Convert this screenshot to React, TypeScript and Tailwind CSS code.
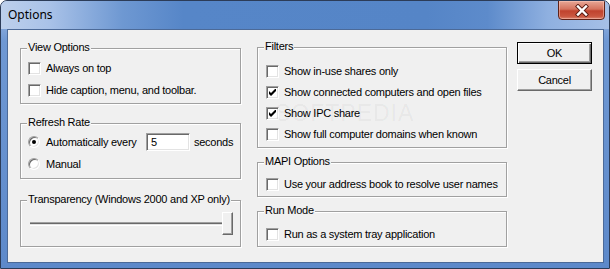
import React from "react";

const Check = ({ checked = false }: { checked?: boolean }) => (
  <span className="w-[13px] h-[13px] shrink-0 bg-white border border-t-[#a0a0a0] border-l-[#a0a0a0] border-r-white border-b-white shadow-[inset_1px_1px_0_#696969,inset_-1px_-1px_0_#e3e3e3] flex items-center justify-center">
    {checked && (
      <svg width="7" height="7" viewBox="0 0 7 7" className="block">
        <path d="M0 2 L2 4 L7 -1 L7 2 L2 7 L0 5 Z" fill="#000" />
      </svg>
    )}
  </span>
);

const Radio = ({ checked = false }: { checked?: boolean }) => (
  <span className="w-[12px] h-[12px] shrink-0 rounded-full bg-white border border-t-[#a0a0a0] border-l-[#a0a0a0] border-r-white border-b-white shadow-[inset_1px_1px_0_#696969,inset_-1px_-1px_0_#e3e3e3] flex items-center justify-center">
    {checked && <span className="w-[4px] h-[4px] rounded-full bg-black" />}
  </span>
);

const Row = ({ checked, children }: { checked?: boolean; children: React.ReactNode }) => (
  <div className="h-[13px] flex items-center gap-[5px] leading-[13px] whitespace-nowrap">
    <Check checked={checked} />
    <span>{children}</span>
  </div>
);

const Group = ({
  label,
  className,
  children,
}: {
  label: string;
  className: string;
  children?: React.ReactNode;
}) => (
  <div
    className={
      "relative border border-[#a0a0a0] shadow-[inset_1px_1px_0_#fff,1px_1px_0_#fff] " + className
    }
  >
    <span className="absolute -top-[8px] left-[6px] bg-[#f0f0f0] px-[1px] leading-[13px] whitespace-nowrap">
      {label}
    </span>
    {children}
  </div>
);

export default function App() {
  return (
    <div className="w-[610px] h-[269px] border border-[#2c3c58] rounded-t-[7px] bg-[linear-gradient(180deg,#a9c2e7_0%,#6f98d3_15%,#5d89ca_100%)] flex flex-col overflow-hidden font-['Liberation_Sans',Arial,sans-serif] text-[11px] tracking-[-0.25px] text-black">
      {/* Title bar */}
      <div className="h-[28px] shrink-0 flex items-start bg-[linear-gradient(90deg,#bdd0ec_0%,#a9c2e8_8%,#6e98d2_20%,#5686c8_30%,#5585c7_70%,#5d8bcb_80%,#8fb0e0_90%,#a6c0e7_100%)]">
        <span className="mt-[6px] ml-[7px] font-['Noto_Sans',sans-serif] text-[12px] leading-[16px] tracking-normal text-black">
          Options
        </span>
        <div className="ml-auto -mt-[1px] mr-[4px] w-[47px] h-[20px] rounded-b-[4px] border border-[#5e2218] bg-[linear-gradient(180deg,#e8a796_0%,#d5735e_45%,#c0432e_55%,#c9563f_85%,#dc8670_100%)] shadow-[inset_0_0_0_1px_rgba(255,210,200,0.45)] flex items-center justify-center">
          <svg width="16" height="13" viewBox="0 0 16 13">
            <path d="M4 2.5 L12 10.5 M12 2.5 L4 10.5" stroke="#5a1d14" strokeWidth="4.2" strokeLinecap="square" />
            <path d="M4 2.5 L12 10.5 M12 2.5 L4 10.5" stroke="#ffffff" strokeWidth="2.4" strokeLinecap="square" />
          </svg>
        </div>
      </div>

      {/* Client area */}
      <div className="ml-[6px] mr-[5px] h-[234px] shrink-0 border border-[#4c6a98] bg-[#f0f0f0] flex items-start pl-[12px] pt-[12px]">
        {/* Left column */}
        <div className="mt-[6px] w-[221px] flex flex-col">
          <Group label="View Options" className="h-[56px] flex flex-col pl-[7px] pt-[13px] gap-[9px]">
            <Row>Always on top</Row>
            <Row>Hide caption, menu, and toolbar.</Row>
          </Group>

          <Group label="Refresh Rate" className="mt-[19px] h-[56px] flex flex-col pl-[7px] pt-[9px] gap-[4px]">
            <div className="h-[18px] flex items-center whitespace-nowrap">
              <Radio checked />
              <span className="ml-[6px] w-[100px] shrink-0 leading-[13px]">Automatically every</span>
              <div className="w-[44px] h-[18px] shrink-0 bg-white border border-t-[#a0a0a0] border-l-[#a0a0a0] border-r-white border-b-white shadow-[inset_1px_1px_0_#696969,inset_-1px_-1px_0_#e3e3e3] pl-[4px] leading-[16px]">
                5
              </div>
              <span className="ml-[4px] leading-[13px]">seconds</span>
            </div>
            <div className="h-[18px] flex items-center whitespace-nowrap">
              <Radio />
              <span className="ml-[6px] leading-[13px]">Manual</span>
            </div>
          </Group>

          <Group label="Transparency (Windows 2000 and XP only)" className="mt-[21px] h-[47px] flex items-start pl-[9px] pt-[11px]">
            <div className="flex items-center">
              <div className="w-[192px] h-[4px] border-t border-b border-t-[#a0a0a0] border-b-white bg-[#e3e3e3] shadow-[inset_0_1px_0_#696969]" />
              <div className="w-[11px] h-[23px] bg-[#f0f0f0] border border-t-white border-l-white border-r-[#696969] border-b-[#696969] shadow-[inset_-1px_-1px_0_#a0a0a0]" />
            </div>
          </Group>
        </div>

        {/* Right column */}
        <div className="ml-[16px] mt-[5px] w-[250px] flex flex-col">
          <Group label="Filters" className="h-[101px] flex flex-col pl-[8px] pt-[17px] gap-[8px]">
            <span className="absolute left-[17px] top-[53px] text-[23px] leading-[24px] tracking-[1px] text-black/[0.05] pointer-events-none whitespace-nowrap">
              SOFTPEDIA
            </span>
            <Row>Show in-use shares only</Row>
            <Row checked>Show connected computers and open files</Row>
            <Row checked>Show IPC share</Row>
            <Row>Show full computer domains when known</Row>
          </Group>

          <Group label="MAPI Options" className="mt-[14px] h-[35px] flex flex-col pl-[8px] pt-[15px]">
            <Row>Use your address book to resolve user names</Row>
          </Group>

          <Group label="Run Mode" className="mt-[14px] h-[36px] flex flex-col pl-[8px] pt-[16px]">
            <Row>Run as a system tray application</Row>
          </Group>
        </div>

        {/* Buttons */}
        <div className="ml-[10px] w-[75px] flex flex-col gap-[5px]">
          <div className="h-[22px] border border-black bg-[#f0f0f0] shadow-[inset_1px_1px_0_#fff,inset_-1px_-1px_0_#696969,inset_-2px_-2px_0_#a0a0a0] flex items-center justify-center leading-[13px]">
            OK
          </div>
          <div className="h-[22px] border border-t-white border-l-white border-r-[#696969] border-b-[#696969] bg-[#f0f0f0] shadow-[inset_-1px_-1px_0_#a0a0a0] flex items-center justify-center leading-[13px]">
            Cancel
          </div>
        </div>
      </div>
    </div>
  );
}
